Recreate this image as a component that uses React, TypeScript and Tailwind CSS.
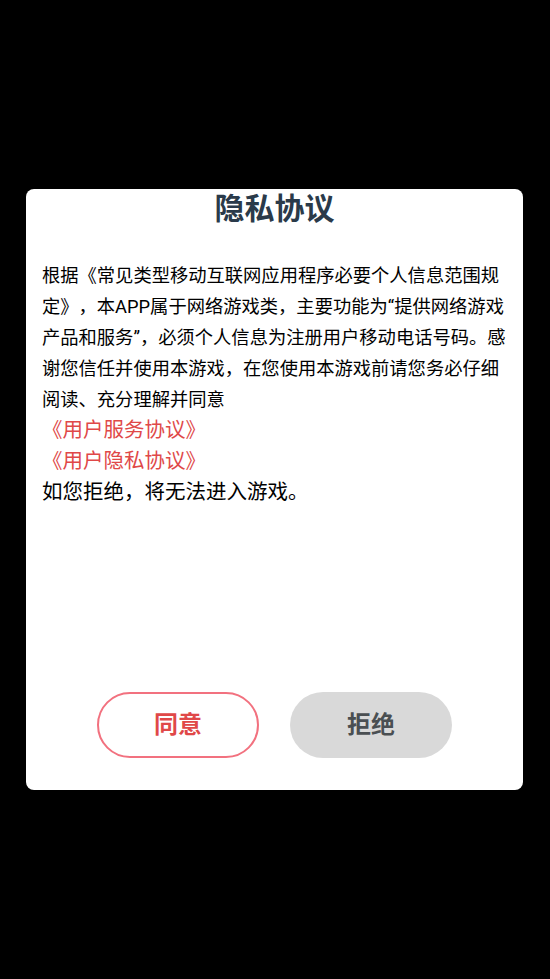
import React from "react";

export default function App() {
  return (
    <div
      className="w-[550px] h-[979px] bg-black overflow-hidden pt-[189px] [text-spacing-trim:space-all]"
      style={{ fontFamily: 'Roboto, "Noto Sans CJK SC", sans-serif' }}
    >
      <div className="ml-[26px] w-[497px] h-[601px] bg-white rounded-[8px] flex flex-col px-4">
        <div className="h-[40px] flex items-center justify-center text-[30px] font-bold text-[#2a3a4a] leading-[40px]">
          隐私协议
        </div>
        <div className="mt-[31px] text-[18.3px] leading-[31px] text-black">
          根据《常见类型移动互联网应用程序必要个人信息范围规定》，本APP属于网络游戏类，主要功能为“提供网络游戏产品和服务”，必须个人信息为注册用户移动电话号码。感谢您信任并使用本游戏，在您使用本游戏前请您务必仔细阅读、充分理解并同意
        </div>
        <div className="text-[20.5px] leading-[31px] text-[#e04848]">《用户服务协议》</div>
        <div className="text-[20.5px] leading-[31px] text-[#e04848]">《用户隐私协议》</div>
        <div className="text-[20.5px] leading-[31px] text-black">如您拒绝，将无法进入游戏。</div>
        <div className="mt-auto mb-[32px] flex justify-center gap-[31px]">
          <button className="w-[162px] h-[66px] rounded-full border-2 border-[#f2717f] bg-white text-[24px] font-bold text-[#e04848]">
            同意
          </button>
          <button className="w-[162px] h-[66px] rounded-full bg-[#d9d9d9] text-[24px] font-bold text-[#4a4f52]">
            拒绝
          </button>
        </div>
      </div>
    </div>
  );
}
